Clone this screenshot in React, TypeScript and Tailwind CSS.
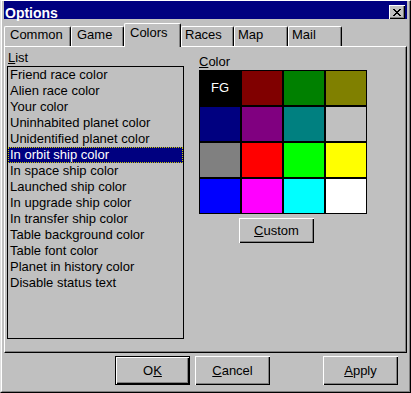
import React from "react";

const items = [
  "Friend race color",
  "Alien race color",
  "Your color",
  "Uninhabited planet color",
  "Unidentified planet color",
  "In orbit ship color",
  "In space ship color",
  "Launched ship color",
  "In upgrade ship color",
  "In transfer ship color",
  "Table background color",
  "Table font color",
  "Planet in history color",
  "Disable status text",
];

const colors = [
  "bg-[#000000]",
  "bg-[#800000]",
  "bg-[#008000]",
  "bg-[#808000]",
  "bg-[#000080]",
  "bg-[#800080]",
  "bg-[#008080]",
  "bg-[#c0c0c0]",
  "bg-[#808080]",
  "bg-[#ff0000]",
  "bg-[#00ff00]",
  "bg-[#ffff00]",
  "bg-[#0000ff]",
  "bg-[#ff00ff]",
  "bg-[#00ffff]",
  "bg-[#ffffff]",
];

const tabs = [
  { label: "Common", w: "w-[67px]", pl: "pl-[5px]", active: false },
  { label: "Game", w: "w-[53px]", pl: "pl-[5px]", active: false },
  { label: "Colors", w: "w-[57px]", pl: "pl-[5px]", active: true },
  { label: "Races", w: "w-[53px]", pl: "pl-[3px]", active: false },
  { label: "Map", w: "w-[54px]", pl: "pl-[3px]", active: false },
  { label: "Mail", w: "w-[54px]", pl: "pl-[3px]", active: false },
];

const bevel =
  "bg-[#c0c0c0] shadow-[inset_1px_1px_#ffffff,inset_-1px_-1px_#000000,inset_-2px_-2px_#808080]";

function XGlyph() {
  const px: [number, number][] = [
    [0, 0], [1, 0], [6, 0], [7, 0],
    [1, 1], [2, 1], [5, 1], [6, 1],
    [2, 2], [3, 2], [4, 2], [5, 2],
    [3, 3], [4, 3],
    [2, 4], [3, 4], [4, 4], [5, 4],
    [1, 5], [2, 5], [5, 5], [6, 5],
    [0, 6], [1, 6], [6, 6], [7, 6],
  ];
  return (
    <svg width="8" height="7" viewBox="0 0 8 7" shapeRendering="crispEdges">
      {px.map(([x, y], i) => (
        <rect key={i} x={x} y={y} width="1" height="1" fill="#000" />
      ))}
    </svg>
  );
}

export default function App() {
  return (
    <div className="w-[411px] h-[393px] bg-[#c0c0c0] border-l border-t border-r border-b border-l-[#dfdfdf] border-t-white border-r-black border-b-black font-['Liberation_Sans',Arial,sans-serif] text-[13px] text-black select-none overflow-hidden">
      <div className="h-full border-l border-r border-b border-l-white border-r-[#808080] border-b-[#808080] px-[2px] flex flex-col">
        {/* Title bar */}
        <div className="h-[18px] shrink-0 bg-[#000080] flex items-start justify-between">
          <span className="mt-[5px] pl-[1px] text-white font-bold text-[14px] leading-[14px]">
            Options
          </span>
          <div
            className={`mt-[4px] mr-[2px] w-[16px] h-[14px] flex items-center justify-center ${bevel}`}
          >
            <XGlyph />
          </div>
        </div>

        {/* Tabs */}
        <div className="mt-[4px] h-[23px] shrink-0 flex items-end">
          {tabs.map((t) =>
            t.active ? (
              <div
                key={t.label}
                className={`relative z-10 -mb-px h-[24px] ${t.w} ${t.pl} pt-[1px] bg-[#c0c0c0] border-l border-t border-r border-l-white border-t-white border-r-black rounded-t-[2px] shadow-[inset_-1px_0_#808080] leading-[16px] whitespace-nowrap`}
              >
                {t.label}
              </div>
            ) : (
              <div
                key={t.label}
                className={`h-[20px] ${t.w} ${t.pl} bg-[#c0c0c0] border-l border-t border-r border-l-white border-t-white border-r-black rounded-t-[2px] shadow-[inset_-1px_0_#808080] leading-[16px] whitespace-nowrap`}
              >
                {t.label}
              </div>
            )
          )}
        </div>

        {/* Panel */}
        <div className="h-[307px] shrink-0 border-l border-t border-r border-b border-l-white border-t-white border-r-black border-b-black shadow-[inset_-1px_-1px_#808080] flex">
          <div className="ml-[2px] mt-[3px] flex flex-col">
            <div className="h-[16px] leading-[16px] pl-[1px]">
              <span className="underline">L</span>ist
            </div>
            <div className="w-[177px] h-[273px] border border-black flex flex-col">
              {items.map((it, i) =>
                i === 5 ? (
                  <div
                    key={it}
                    className="h-[16px] leading-[16px] pl-[2px] whitespace-nowrap bg-[#000080] text-white outline-1 outline-dotted outline-[#c8c800] -outline-offset-1"
                  >
                    {it}
                  </div>
                ) : (
                  <div key={it} className="h-[16px] leading-[16px] pl-[2px] whitespace-nowrap">
                    {it}
                  </div>
                )
              )}
            </div>
          </div>

          <div className="ml-[15px] mt-[7px] flex flex-col">
            <div className="h-[16px] leading-[16px]">
              <span className="underline">C</span>olor
            </div>
            <div className="w-[168px] bg-black p-[1px] grid grid-cols-4 gap-[2px]">
              {colors.map((c, i) => (
                <div
                  key={i}
                  className={`h-[34px] flex items-center justify-center text-white leading-[16px] ${c}`}
                >
                  {i === 0 ? "FG" : null}
                </div>
              ))}
            </div>
            <button
              className={`mt-[4px] ml-[40px] w-[75px] h-[25px] flex items-center justify-center leading-[16px] ${bevel}`}
            >
              <span className="underline">C</span>ustom
            </button>
          </div>
        </div>

        {/* Buttons */}
        <div className="h-[38px] shrink-0 pt-[3px] flex items-start">
          <button
            className="ml-[111px] w-[75px] h-[29px] border border-black bg-[#c0c0c0] shadow-[inset_1px_1px_#ffffff,inset_-1px_-1px_#000000,inset_-2px_-2px_#808080] flex items-center justify-center leading-[16px]"
          >
            O<span className="underline">K</span>
          </button>
          <button
            className={`ml-[5px] w-[75px] h-[29px] flex items-center justify-center leading-[16px] ${bevel}`}
          >
            <span className="underline">C</span>ancel
          </button>
          <button
            className={`ml-[53px] w-[75px] h-[29px] flex items-center justify-center leading-[16px] ${bevel}`}
          >
            <span className="underline">A</span>pply
          </button>
        </div>
      </div>
    </div>
  );
}
